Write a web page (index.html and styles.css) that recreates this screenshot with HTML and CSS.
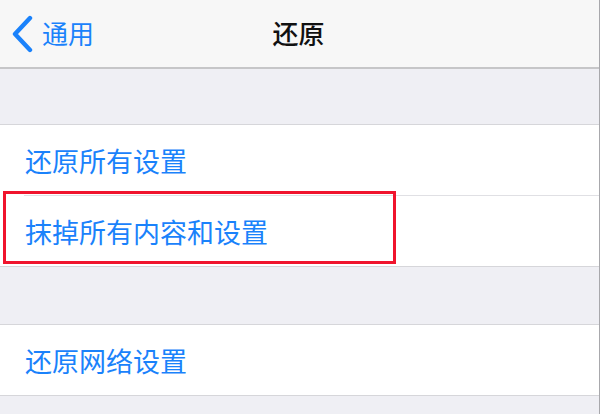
FILE: index.html
```html
<!DOCTYPE html>
<html lang="zh-CN">
<head>
    <meta charset="UTF-8">
    <meta name="viewport" content="width=device-width, initial-scale=1.0">
    <title>还原</title>
    <link rel="stylesheet" href="styles.css">
</head>
<body>

    <div class="screen">
        <!-- Navigationsleiste -->
        <div class="navbar">
            <a class="back">
                <svg class="chevron" width="24" height="38" viewBox="0 0 24 38">
                    <path d="M20 3 L5 19 L20 35" fill="none" stroke="#1a82fb" stroke-width="4.4" stroke-linecap="round" stroke-linejoin="round"/>
                </svg>
                <span>通用</span>
            </a>
            <span class="title">还原</span>
        </div>

        <div class="gap"></div>

        <div class="group">
            <div class="cell">还原所有设置</div>
            <div class="cell">抹掉所有内容和设置</div>
        </div>

        <div class="gap gap-wide"></div>

        <div class="group">
            <div class="cell">还原网络设置</div>
        </div>

        <div class="rest"></div>

        <!-- Rote Markierung -->
        <div class="highlight"></div>
    </div>

</body>
</html>
```

FILE: styles.css
```css
body {
    margin: 0;
    padding: 0;
    font-family: "Noto Sans CJK SC", "Noto Sans", sans-serif;
    background-color: #efeff4;
    overflow: hidden;
}

.screen {
    position: relative;
    width: 599px;
    height: 414px;
    border-right: 1px solid #a8a8ac;
    display: flex;
    flex-direction: column;
    background-color: #efeff4;
}

/* Navigationsleiste */
.navbar {
    position: relative;
    height: 67px;
    flex-shrink: 0;
    background-color: #f7f7f7;
    border-bottom: 2px solid #c6c6c8;
    display: flex;
    align-items: center;
    justify-content: center;
}

.back {
    position: absolute;
    left: 10px;
    top: 0;
    height: 67px;
    display: flex;
    align-items: center;
    color: #1a82fb;
    font-size: 26px;
}

.chevron {
    margin-right: 8px;
    margin-top: 1px;
}

.back span {
    line-height: 1;
    margin-top: -1px;
}

.title {
    font-size: 26px;
    font-weight: 500;
    color: #111;
    line-height: 1;
    margin-top: -2px;
    margin-left: -2px;
}

.gap {
    height: 55px;
    flex-shrink: 0;
}

.gap-wide {
    height: 57px;
}

.group {
    background-color: white;
    border-top: 1px solid #d6d6da;
    border-bottom: 1px solid #d6d6da;
    flex-shrink: 0;
}

.cell {
    height: 70px;
    display: flex;
    align-items: center;
    padding-left: 25px;
    font-size: 27px;
    color: #1a82fb;
    line-height: 1;
    position: relative;
}

/* Trennlinie mit Einzug */
.cell + .cell::before {
    content: "";
    position: absolute;
    top: -1px;
    left: 24px;
    right: 0;
    border-top: 1px solid #e0e0e4;
}

.cell + .cell {
    margin-top: 1px;
}

.rest {
    flex: 1;
}

/* Rote Markierung */
.highlight {
    position: absolute;
    left: 3px;
    top: 191px;
    width: 387px;
    height: 67px;
    border: 3px solid #f0142d;
    pointer-events: none;
}
```
